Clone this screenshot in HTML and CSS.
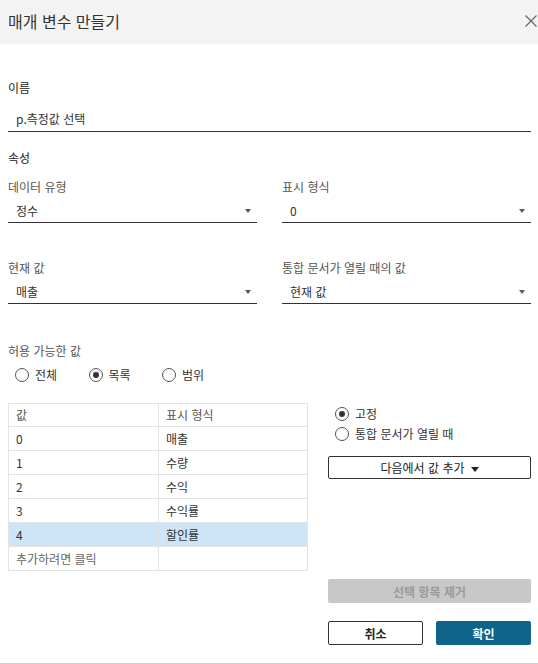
FILE: index.html
```html
<!DOCTYPE html>
<html lang="ko">
<head>
    <meta charset="UTF-8">
    <meta name="viewport" content="width=device-width, initial-scale=1.0">
    <title>매개 변수 만들기</title>
    <link rel="stylesheet" href="styles.css">
</head>
<body>
    <div class="dialog">
        <!-- Header -->
        <div class="header">
            <span class="title">매개 변수 만들기</span>
            <svg class="close" width="12" height="12" viewBox="0 0 12 12">
                <path d="M0.5 0.5 L11.5 11.5 M11.5 0.5 L0.5 11.5" stroke="#666" stroke-width="1.2" fill="none"/>
            </svg>
        </div>

        <div class="content">
            <!-- Name -->
            <div class="heading heading-name">이름</div>
            <div class="text-input">p.측정값 선택</div>

            <!-- Properties -->
            <div class="heading heading-props">속성</div>
            <div class="fields">
                <div class="field">
                    <div class="field-label">데이터 유형</div>
                    <div class="select"><span>정수</span><span class="arrow"></span></div>
                </div>
                <div class="field">
                    <div class="field-label">표시 형식</div>
                    <div class="select"><span>0</span><span class="arrow"></span></div>
                </div>
                <div class="field">
                    <div class="field-label">현재 값</div>
                    <div class="select"><span>매출</span><span class="arrow"></span></div>
                </div>
                <div class="field">
                    <div class="field-label">통합 문서가 열릴 때의 값</div>
                    <div class="select"><span>현재 값</span><span class="arrow"></span></div>
                </div>
            </div>

            <!-- Allowed values -->
            <div class="field-label allowed-label">허용 가능한 값</div>
            <div class="radio-row">
                <label class="radio"><span class="circle"></span>전체</label>
                <label class="radio"><span class="circle checked"></span>목록</label>
                <label class="radio"><span class="circle"></span>범위</label>
            </div>

            <div class="list-area">
                <div class="value-table">
                    <div class="row head"><div class="cell">값</div><div class="cell">표시 형식</div></div>
                    <div class="row"><div class="cell">0</div><div class="cell">매출</div></div>
                    <div class="row"><div class="cell">1</div><div class="cell">수량</div></div>
                    <div class="row"><div class="cell">2</div><div class="cell">수익</div></div>
                    <div class="row"><div class="cell">3</div><div class="cell">수익률</div></div>
                    <div class="row selected"><div class="cell">4</div><div class="cell">할인률</div></div>
                    <div class="row add-row"><div class="cell">추가하려면 클릭</div><div class="cell"></div></div>
                </div>

                <div class="side">
                    <div class="side-radios">
                        <label class="radio"><span class="circle checked"></span>고정</label>
                        <label class="radio"><span class="circle"></span>통합 문서가 열릴 때</label>
                    </div>
                    <button class="btn btn-add">다음에서 값 추가<span class="arrow arrow-dark"></span></button>
                    <button class="btn btn-remove">선택 항목 제거</button>
                </div>
            </div>

            <!-- Footer -->
            <div class="footer">
                <button class="btn btn-cancel">취소</button>
                <button class="btn btn-ok">확인</button>
            </div>
        </div>
    </div>
</body>
</html>
```
FILE: styles.css
```css
* {
    box-sizing: border-box;
}
body {
    margin: 0;
    font-family: "Noto Sans CJK KR", "Noto Sans", sans-serif;
    font-size: 12px;
    line-height: 18px;
    color: #333;
    background: #fff;
}
.dialog {
    height: 664px;
    border-bottom: 1px solid #cfcfcf;
}
.header {
    height: 44px;
    background-color: #f3f3f3;
    display: flex;
    align-items: center;
    justify-content: space-between;
    padding: 0 1px 0 8px;
}
.title {
    font-size: 16px;
    color: #333;
    margin-top: -2px;
}
.close {
    margin-top: -3px;
}
.content {
    padding: 0 7px 0 8px;
}
.heading {
    color: #222;
}
.heading-name {
    margin-top: 35px;
}
.text-input {
    margin-top: 10px;
    height: 25px;
    padding: 0 8px;
    display: flex;
    align-items: center;
    border-bottom: 1px solid #333;
}
.heading-props {
    margin-top: 17px;
}
.fields {
    display: grid;
    grid-template-columns: 249px 249px;
    column-gap: 25px;
    row-gap: 36px;
    margin-top: 11px;
}
.field-label {
    color: #555;
}
.select {
    margin-top: 3px;
    height: 24px;
    padding: 0 6px 0 8px;
    display: flex;
    align-items: center;
    justify-content: space-between;
    border-bottom: 1px solid #333;
}
.arrow {
    display: inline-block;
    width: 0;
    height: 0;
    border-left: 3.5px solid transparent;
    border-right: 3.5px solid transparent;
    border-top: 4px solid #5a5a5a;
    margin-top: 1px;
}
.arrow-dark {
    border-left-width: 4px;
    border-right-width: 4px;
    border-top: 5px solid #222;
    margin: 0 0 1px 6px;
    vertical-align: middle;
}
.allowed-label {
    margin-top: 38px;
}
.radio-row {
    display: flex;
    margin-top: 6px;
    padding-left: 7px;
}
.radio {
    display: flex;
    align-items: center;
    gap: 6px;
    color: #333;
}
.radio-row .radio {
    width: 73.5px;
}
.circle {
    width: 14px;
    height: 14px;
    border: 1.2px solid #555;
    border-radius: 50%;
    display: flex;
    align-items: center;
    justify-content: center;
}
.circle.checked::after {
    content: "";
    width: 6px;
    height: 6px;
    border-radius: 50%;
    background-color: #333;
}
.list-area {
    display: flex;
    margin-top: 19px;
}
.value-table {
    width: 300px;
    height: 168px;
    border: 1px solid #e4e4e4;
}
.row {
    display: grid;
    grid-template-columns: 150px 1fr;
    height: 24px;
    border-top: 1px solid #e4e4e4;
}
.row.head {
    height: 22px;
    border-top: none;
    color: #555;
}
.cell {
    display: flex;
    align-items: center;
    padding: 0 7px;
}
.cell:first-child {
    border-right: 1px solid #e4e4e4;
}
.row.selected {
    background-color: #cee4f7;
}
.row.add-row {
    color: #666;
}
.side {
    width: 203px;
    margin-left: 20px;
    display: flex;
    flex-direction: column;
}
.side-radios {
    padding: 1px 0 0 7px;
}
.side-radios .radio {
    height: 20px;
}
.btn {
    font-family: inherit;
    font-size: 12px;
    height: 24px;
    border-radius: 2px;
    padding: 0;
}
.btn-add {
    margin-top: 12px;
    height: 23px;
    border: 1px solid #333;
    background: #fff;
    color: #222;
}
.btn-remove {
    margin-top: 100px;
    border: none;
    background-color: #c8c8c8;
    color: #9a9a9a;
    font-weight: bold;
}
.footer {
    display: flex;
    justify-content: flex-end;
    gap: 13px;
    margin-top: 18px;
}
.btn-cancel,
.btn-ok {
    width: 95px;
    font-weight: bold;
}
.btn-cancel {
    border: 1px solid #333;
    background: #fff;
    color: #222;
}
.btn-ok {
    border: none;
    background-color: #0e6489;
    color: #fff;
}
```
